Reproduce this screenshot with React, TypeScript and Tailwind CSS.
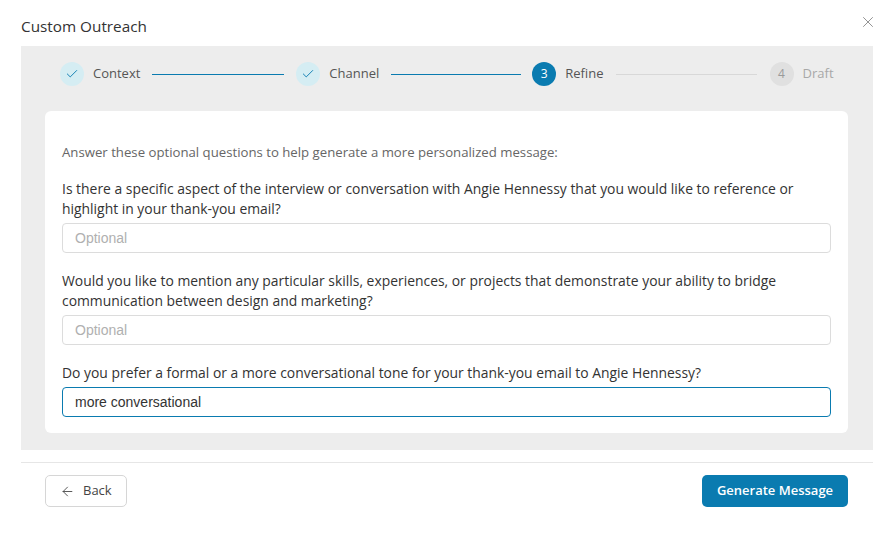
import * as React from 'react'
import { Check, X, ArrowLeft } from 'lucide-react'

type StepState = 'done' | 'active' | 'todo'

interface Step {
  n: number
  label: string
  state: StepState
}

const steps: Step[] = [
  { n: 1, label: 'Context', state: 'done' },
  { n: 2, label: 'Channel', state: 'done' },
  { n: 3, label: 'Refine', state: 'active' },
  { n: 4, label: 'Draft', state: 'todo' },
]

function StepDot({ step }: { step: Step }) {
  if (step.state === 'done') {
    return (
      <div className="flex h-6 w-6 shrink-0 items-center justify-center rounded-full bg-[#d5edf3]">
        <Check className="h-3.5 w-3.5 text-[#0a7bb0]" strokeWidth={1.6} />
      </div>
    )
  }
  if (step.state === 'active') {
    return (
      <div className="flex h-6 w-6 shrink-0 items-center justify-center rounded-full bg-[#0a7bb0] text-[12px] text-white">
        {step.n}
      </div>
    )
  }
  return (
    <div className="flex h-6 w-6 shrink-0 items-center justify-center rounded-full bg-[#e0e0e0] text-[12px] text-[#9a9a9a]">
      {step.n}
    </div>
  )
}

function Stepper() {
  return (
    <div className="flex h-[56px] items-center pl-[39px]">
      {steps.map((step, i) => (
        <React.Fragment key={step.n}>
          <div className="flex items-center gap-[9px]">
            <StepDot step={step} />
            <span
              className={
                step.state === 'todo'
                  ? 'text-[13px] text-[#a8a8a8]'
                  : 'text-[13px] text-[#555]'
              }
            >
              {step.label}
            </span>
          </div>
          {i === 0 && <div className="mx-3 h-px w-[132px] bg-[#0a7bb0]" />}
          {i === 1 && <div className="ml-3 mr-[11px] h-px w-[130px] bg-[#0a7bb0]" />}
          {i === 2 && <div className="ml-3 mr-[13px] h-px w-[141px] bg-[#d8d8d8]" />}
        </React.Fragment>
      ))}
    </div>
  )
}

function Question({
  label,
  value,
  focused,
}: {
  label: string
  value?: string
  focused?: boolean
}) {
  return (
    <div className="flex flex-col">
      <label className="text-[13.9px] font-medium leading-5 text-[#333]">{label}</label>
      <input
        readOnly
        defaultValue={value}
        placeholder="Optional"
        className={
          focused
            ? 'mt-[4px] h-[30px] w-full rounded-[4px] border border-[#0a7bb0] bg-white px-3 text-[14px] text-[#333] outline-none [font-family:"Liberation_Sans",Arial,sans-serif] placeholder:text-[#b0b0b0]'
            : 'mt-[4px] h-[30px] w-full rounded-[4px] border border-[#dcdcdc] bg-white px-3 text-[14px] text-[#333] outline-none [font-family:"Liberation_Sans",Arial,sans-serif] placeholder:text-[#b0b0b0]'
        }
      />
    </div>
  )
}

export default function App() {
  return (
    <div className="h-[534px] w-[892px] bg-white [font-family:'Open_Sans',sans-serif]">
      {/* Header */}
      <div className="relative flex h-[46px] items-center px-[21px] pt-[6px]">
        <h1 className="text-[15.3px] text-[#333]">Custom Outreach</h1>
        <button className="absolute right-[15px] top-[13px] text-[#888]">
          <X className="h-[18px] w-[18px]" strokeWidth={1.2} />
        </button>
      </div>

      {/* Body */}
      <div className="ml-[21px] h-[404px] w-[852px] bg-[#ededed]">
        <Stepper />
        <div className="ml-[24px] mr-[25px] mt-[9px] flex flex-col rounded-[6px] bg-white px-[17px] pb-[16px] pt-[31px]">
          <p className="text-[13.2px] leading-5 text-[#666]">
            Answer these optional questions to help generate a more personalized message:
          </p>
          <div className="mt-[17px] flex flex-col gap-[18px]">
            <Question label="Is there a specific aspect of the interview or conversation with Angie Hennessy that you would like to reference or highlight in your thank-you email?" />
            <Question label="Would you like to mention any particular skills, experiences, or projects that demonstrate your ability to bridge communication between design and marketing?" />
            <Question
              label="Do you prefer a formal or a more conversational tone for your thank-you email to Angie Hennessy?"
              value="more conversational"
              focused
            />
          </div>
        </div>
      </div>

      {/* Footer */}
      <div className="ml-[21px] mt-[12px] w-[852px] border-t border-[#e6e6e6]" />
      <div className="flex items-center justify-between pl-[45px] pr-[44px] pt-[12px]">
        <button className="flex h-[32px] w-[82px] items-center gap-[8px] rounded-[5px] border border-[#d6d6d6] bg-white pl-[14px] text-[13px] text-[#444]">
          <ArrowLeft className="h-[15px] w-[15px]" strokeWidth={1.4} />
          Back
        </button>
        <button className="h-[32px] w-[146px] rounded-[5px] bg-[#0a7bb0] text-[13px] font-semibold text-white">
          Generate Message
        </button>
      </div>
    </div>
  )
}
